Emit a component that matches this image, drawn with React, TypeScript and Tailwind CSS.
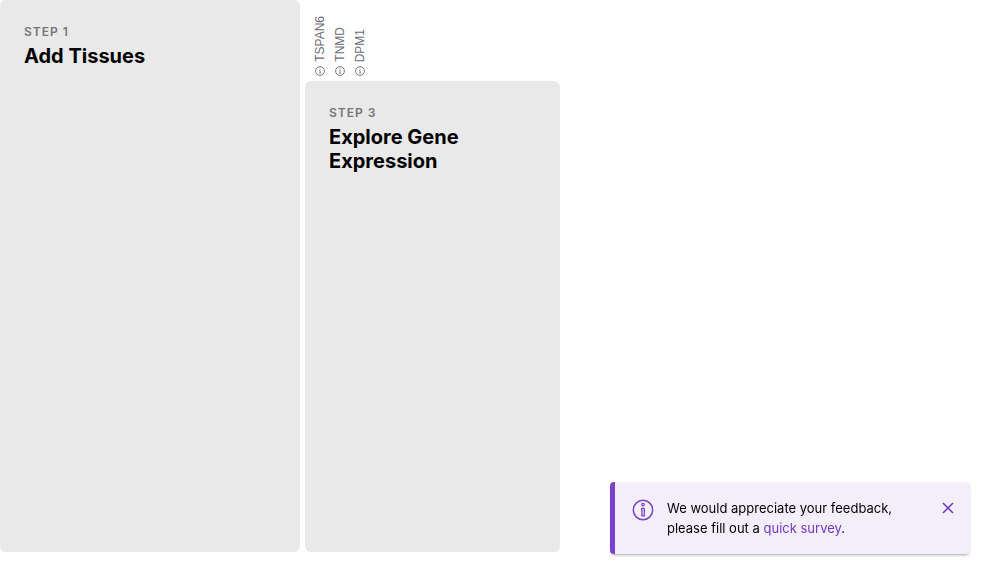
import { useState } from "react";

const genes = ["TSPAN6", "TNMD", "DPM1"];

function GeneInfoIcon() {
  return (
    <svg width="10" height="10" viewBox="0 0 10 10" fill="none" stroke="#767676" aria-hidden="true">
      <circle cx="5" cy="5" r="4.4" strokeWidth="1" />
      <path d="M4.1 4.6H5.1V7M4 7.1H6.2" strokeWidth="0.8" />
      <circle cx="5" cy="3" r="0.4" strokeWidth="0.5" />
    </svg>
  );
}

function GeneLabel({ name }: { name: string }) {
  return (
    <li className="flex w-5 flex-col items-center justify-end gap-1">
      <span className="rotate-180 font-['Liberation_Sans',sans-serif] text-xs leading-5 text-[#6c6c75] [writing-mode:vertical-rl]">
        {name}
      </span>
      <button type="button" aria-label={`About ${name}`}>
        <GeneInfoIcon />
      </button>
    </li>
  );
}

function StepPanel({ step, title, className }: { step: string; title: string; className: string }) {
  return (
    <section className={`rounded-md bg-[#e9e9e9] p-6 ${className}`}>
      <p className="text-xs leading-4 font-semibold tracking-[1px] text-[#767676]">{step}</p>
      <h2 className="mt-1 text-xl leading-6 font-bold text-black">{title}</h2>
    </section>
  );
}

function FeedbackToast({ onClose }: { onClose: () => void }) {
  return (
    <aside
      role="status"
      className="fixed right-[30px] bottom-[22px] flex w-[360px] items-start rounded-sm border-l-[5px] border-[#7a41ce] bg-[#f3effa] py-4 pr-4 pl-[17px] shadow-[0_2px_3px_-1px_rgba(0,0,0,0.35)]"
    >
      <svg width="22" height="22" viewBox="0 0 22 22" fill="none" stroke="#7a45c0" className="mt-px shrink-0" aria-hidden="true">
        <circle cx="11" cy="11" r="9.7" strokeWidth="1.5" />
        <circle cx="11" cy="5.6" r="1.3" strokeWidth="1.2" />
        <path d="M9.6 9.3H12.3V16.8H9.9V11H9.6Z" strokeWidth="1.3" strokeLinejoin="round" />
      </svg>
      <p className="ml-[13px] flex-1 text-[13px] leading-5 text-black">
        We would appreciate your feedback,
        <br />
        please fill out a{" "}
        <a href="#survey" className="text-[#7038bd]">
          quick survey
        </a>
        .
      </p>
      <button type="button" aria-label="Close" onClick={onClose} className="mt-1">
        <svg width="12" height="12" viewBox="0 0 12 12" fill="none" stroke="#6b35b5" strokeWidth="1.5" aria-hidden="true">
          <path d="M1 1L11 11M11 1L1 11" />
        </svg>
      </button>
    </aside>
  );
}

export default function App() {
  const [toastOpen, setToastOpen] = useState(true);
  return (
    <main className="flex min-h-screen gap-[5px] bg-white pb-6 font-[Inter,sans-serif]">
      <StepPanel step="STEP 1" title="Add Tissues" className="w-[300px] shrink-0" />
      <div className="flex w-[255px] shrink-0 flex-col">
        <ul className="flex h-[81px] pb-[5px] pl-[5px]">
          {genes.map((name) => (
            <GeneLabel key={name} name={name} />
          ))}
        </ul>
        <StepPanel step="STEP 3" title="Explore Gene Expression" className="flex-1" />
      </div>
      {toastOpen && <FeedbackToast onClose={() => setToastOpen(false)} />}
    </main>
  );
}
